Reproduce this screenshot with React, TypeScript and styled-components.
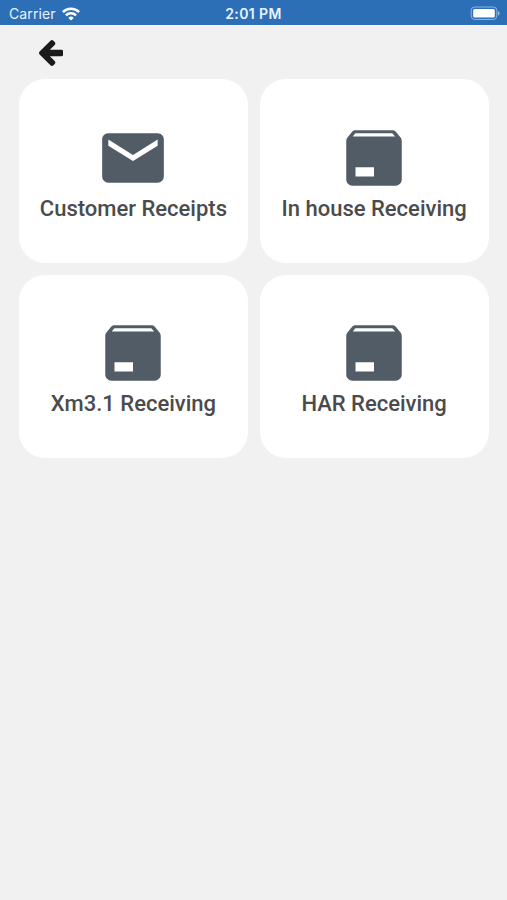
import React from "react";
import styled, { createGlobalStyle } from "styled-components";

const GlobalStyle = createGlobalStyle`
  * { box-sizing: border-box; }
  body { margin: 0; background: #f1f1f1; }
`;

const Screen = styled.div`
  width: 100%;
  min-height: 900px;
  background: #f1f1f1;
  font-family: Roboto, sans-serif;
`;

const StatusBar = styled.header`
  display: grid;
  grid-template-columns: 1fr auto 1fr;
  align-items: center;
  height: 25px;
  padding: 2px 7px 0 9px;
  background: #2d6fb7;
  color: #e9f3ff;
  font-family: Inter, sans-serif;
  font-size: 14px;
  line-height: 22px;
`;

const Carrier = styled.div`
  display: flex;
  align-items: center;
  gap: 6px;
  letter-spacing: 0.12px;
`;

const Clock = styled.div`
  padding-right: 2px;
  font-size: 14px;
  font-weight: 600;
  letter-spacing: 0.4px;
`;

const Battery = styled.svg`
  display: block;
  justify-self: end;
`;

const NavBar = styled.nav`
  display: flex;
  align-items: center;
  height: 54px;
  padding: 1px 0 0 38.5px;
  box-shadow: inset 0 1px 0 #fafafa;
`;

const BackButton = styled.button`
  display: flex;
  padding: 0;
  border: 0;
  background: none;
`;

const Menu = styled.main`
  display: grid;
  grid-template-columns: 1fr 1fr;
  grid-auto-rows: 183.5px;
  gap: 12px;
  padding: 0 18.5px 0 19px;
`;

const Card = styled.button`
  display: flex;
  flex-direction: column;
  align-items: center;
  justify-content: flex-start;
  padding: 41.5px 0 0;
  border: 0;
  border-radius: 26px;
  background: #fff;
  color: #4b4b4d;
  font-family: inherit;
`;

const CardIcon = styled.svg`
  display: block;
  flex: none;
  width: 74px;
  height: 74px;
  fill: #525c67;
`;

const Label = styled.span`
  font-size: 22px;
  font-weight: 500;
  line-height: 27px;
  white-space: nowrap;
`;

const MAIL =
  "M20 4H4c-1.1 0-2 .9-2 2v12c0 1.1.9 2 2 2h16c1.1 0 2-.9 2-2V6c0-1.1-.9-2-2-2zm0 4l-8 5-8-5V6l8 5 8-5v2z";
const BOX =
  "M20.54 5.23l-1.39-1.68C18.88 3.21 18.47 3 18 3H6c-.47 0-.88.21-1.16.55L3.46 5.23C3.17 5.57 3 6.02 3 6.5V19c0 1.1.9 2 2 2h14c1.1 0 2-.9 2-2V6.5c0-.48-.17-.93-.46-1.27zM12 18H6v-3h6v3zM5.12 5l.81-1h12l.94 1H5.12z";

const items = [
  { label: "Customer Receipts", icon: MAIL },
  { label: "In house Receiving", icon: BOX },
  { label: "Xm3.1 Receiving", icon: BOX },
  { label: "HAR Receiving", icon: BOX },
];

export default function App() {
  return (
    <Screen>
      <GlobalStyle />
      <StatusBar>
        <Carrier>
          <span>Carrier</span>
          <svg width="18" height="14" viewBox="0 0 18 14" fill="none" stroke="#fff" strokeWidth="2.5">
            <path d="M.9 5.1a11.5 11.5 0 0 1 16.2 0" />
            <path d="M3.9 8.3a7.2 7.2 0 0 1 10.2 0" />
            <path d="M9 13.6 6.3 10.9a3.8 3.8 0 0 1 5.4 0z" fill="#fff" stroke="none" />
          </svg>
        </Carrier>
        <Clock>2:01 PM</Clock>
        <Battery width="30" height="15" viewBox="0 0 30 15">
          <rect x="1.2" y="1" width="25.6" height="12.5" rx="3.5" fill="none" stroke="#8fb5de" />
          <rect x="3.2" y="3" width="21.6" height="8.5" rx="1.5" fill="#fff" />
          <path d="M28 5.2c2 .7 2 3.6 0 4.3z" fill="#9cbfe5" />
        </Battery>
      </StatusBar>
      <NavBar>
        <BackButton aria-label="Back">
          <svg width="24.5" height="26" viewBox="192 181 1472 1558" fill="#1b1b1c">
            <path d="M1664 896v128q0 53-32.500 90.500t-84.500 37.500H843l293 294q38 36 38 90t-38 90l-75 76q-37 37-90 37-52 0-91-37L229 1051q-37-37-37-91 0-53 37-91l651-650q38-38 91-38 52 0 90 38l75 75q38 38 38 91t-38 91L843 768h704q52 0 84.500 37.500T1664 896z" />
          </svg>
        </BackButton>
      </NavBar>
      <Menu>
        {items.map((item) => (
          <Card key={item.label}>
            <CardIcon viewBox="0 0 24 24">
              <path d={item.icon} />
            </CardIcon>
            <Label>{item.label}</Label>
          </Card>
        ))}
      </Menu>
    </Screen>
  );
}
